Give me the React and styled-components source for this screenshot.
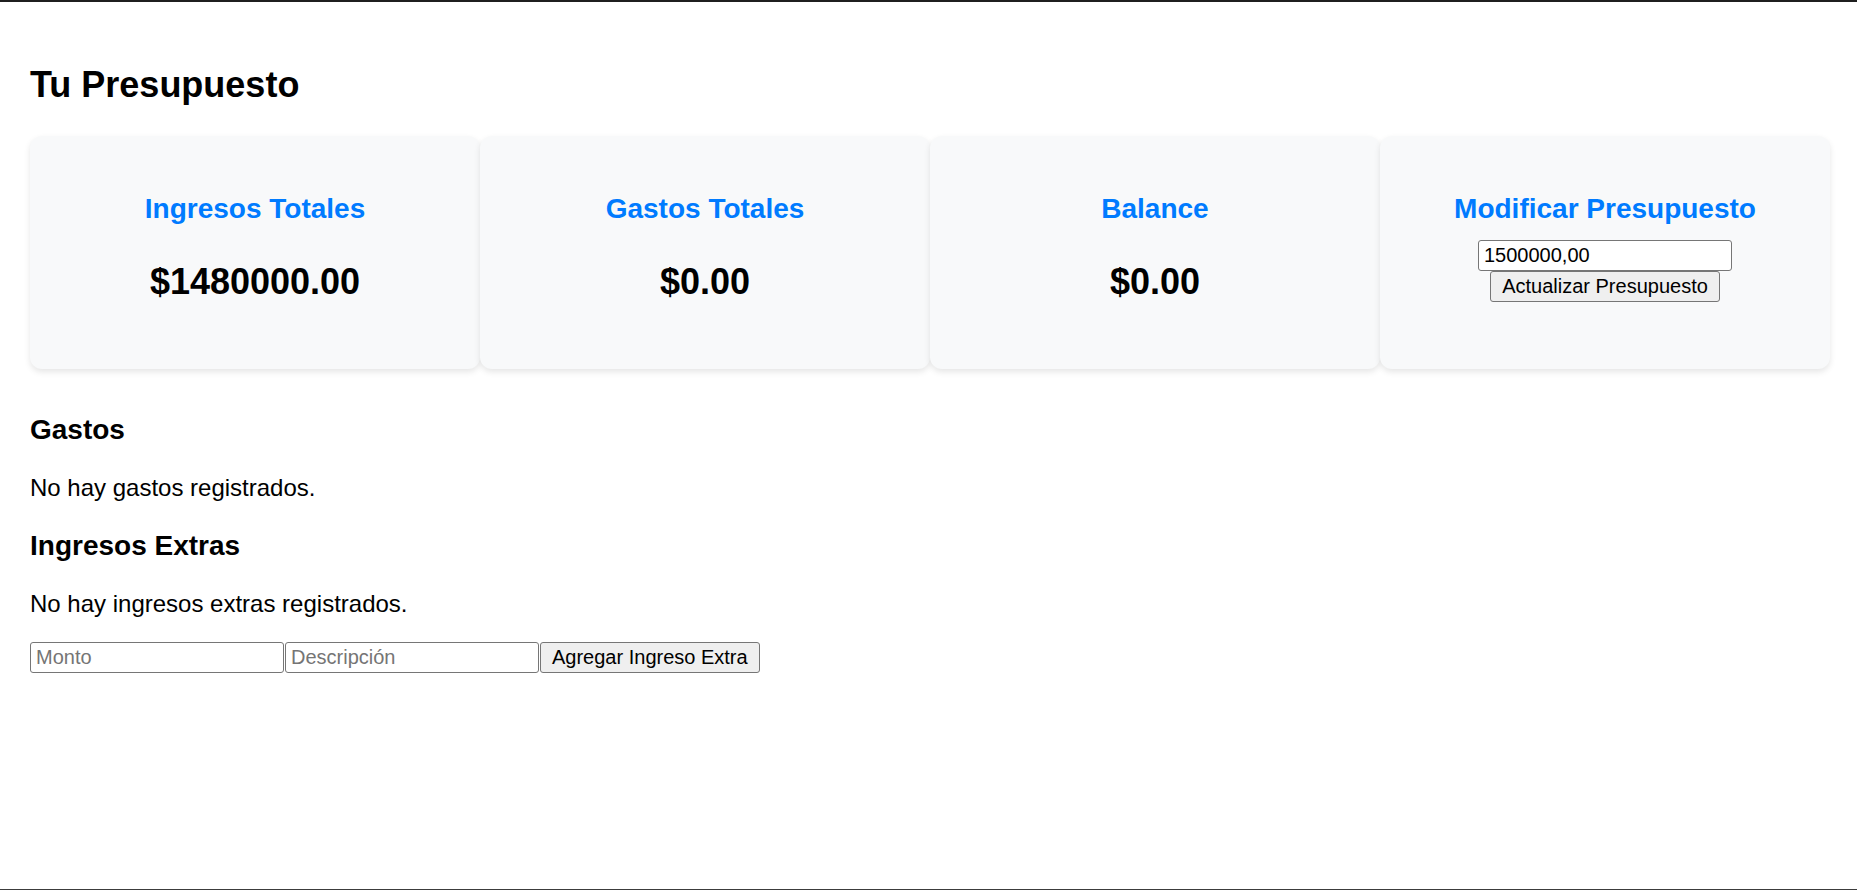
import React from 'react';
import styled, { createGlobalStyle } from 'styled-components';

const GlobalStyle = createGlobalStyle`
  html, body {
    margin: 0;
    padding: 0;
    background: #ffffff;
  }

  body {
    font-family: "Liberation Sans", Arial, sans-serif;
    color: #000000;
  }
`;

const Page = styled.div`
  box-sizing: border-box;
  min-height: 100vh;
  padding: 32px 30px;
  border-top: 2px solid #1f1f1f;
  border-bottom: 1px solid #3c3c3c;
`;

const Title = styled.h2`
  margin: 30px 0;
  font-size: 36px;
  font-weight: bold;
`;

const CardGrid = styled.div`
  display: grid;
  grid-template-columns: repeat(4, 450px);
`;

const Card = styled.div`
  box-sizing: border-box;
  padding: 30px;
  background: #f8f9fa;
  border-radius: 12px;
  box-shadow: 0 3px 6px rgba(0, 0, 0, 0.1);
  text-align: center;
`;

const CardTitle = styled.h3`
  margin: 27px 0 15px;
  font-size: 28px;
  font-weight: bold;
  color: #007bff;
`;

const CardValue = styled.p`
  margin: 36px 0;
  font-size: 36px;
  font-weight: bold;
`;

const BudgetForm = styled.div`
  display: flex;
  flex-direction: column;
  align-items: center;
`;

const TextInput = styled.input`
  box-sizing: border-box;
  width: 254px;
  height: 31px;
  padding: 1px 5px;
  border: 1px solid #767676;
  border-radius: 3px;
  background: #ffffff;
  font-family: "Liberation Sans", Arial, sans-serif;
  font-size: 20px;
  color: #000000;

  &::placeholder {
    color: #757575;
  }
`;

const Button = styled.button`
  box-sizing: border-box;
  height: 31px;
  padding: 0 11px;
  border: 1px solid #767676;
  border-radius: 3px;
  background: #efefef;
  font-family: "Liberation Sans", Arial, sans-serif;
  font-size: 20px;
  color: #000000;
`;

const SectionTitle = styled.h3`
  margin: ${props => (props.$first ? '45px' : '28px')} 0 28px;
  font-size: 28px;
  font-weight: bold;
`;

const EmptyText = styled.p`
  margin: 24px 0;
  font-size: 24px;
`;

const ExtraForm = styled.div`
  display: flex;
  gap: 1px;
`;

const cards = [
  { title: 'Ingresos Totales', value: '$1480000.00' },
  { title: 'Gastos Totales', value: '$0.00' },
  { title: 'Balance', value: '$0.00' },
];

export default function App() {
  return (
    <Page>
      <GlobalStyle />
      <Title>Tu Presupuesto</Title>

      <CardGrid>
        {cards.map(card => (
          <Card key={card.title}>
            <CardTitle>{card.title}</CardTitle>
            <CardValue>{card.value}</CardValue>
          </Card>
        ))}
        <Card>
          <CardTitle>Modificar Presupuesto</CardTitle>
          <BudgetForm>
            <TextInput type="text" defaultValue="1500000,00" />
            <Button>Actualizar Presupuesto</Button>
          </BudgetForm>
        </Card>
      </CardGrid>

      <SectionTitle $first>Gastos</SectionTitle>
      <EmptyText>No hay gastos registrados.</EmptyText>

      <SectionTitle>Ingresos Extras</SectionTitle>
      <EmptyText>No hay ingresos extras registrados.</EmptyText>

      <ExtraForm>
        <TextInput type="text" placeholder="Monto" />
        <TextInput type="text" placeholder="Descripción" />
        <Button>Agregar Ingreso Extra</Button>
      </ExtraForm>
    </Page>
  );
}
